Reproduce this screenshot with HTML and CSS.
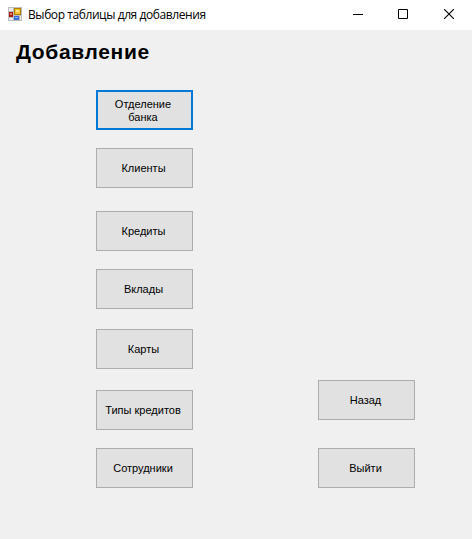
FILE: index.html
```html
<!DOCTYPE html>
<html lang="ru">
<head>
<meta charset="utf-8">
<title>Выбор таблицы для добавления</title>
<link rel="stylesheet" href="styles.css">
</head>
<body>
<header class="titlebar">
  <svg class="app-icon" width="14" height="14" viewBox="0 0 14 14" shape-rendering="crispEdges">
    <path fill="#bcbcbc" d="M0 0h14v14H0z"/>
    <path fill="#ececec" d="M1 1h4v3H1zM1 11h4v2H1zM12 9h1v4h-1z"/>
    <path fill="#a81c12" d="M1 5h4v5H1z"/>
    <path fill="#e8806c" d="M2 6h2v2H2z"/>
    <path fill="#b08000" d="M6 1h7v7H6z"/>
    <path fill="#f4c430" d="M7 2h5v5H7z"/>
    <path fill="#ffe48a" d="M8 3h3v2H8z"/>
    <path fill="#3a6fd8" d="M6 9h5v4H6z"/>
    <path fill="#86b0ff" d="M7 10h3v1H7z"/>
  </svg>
  <span class="caption">Выбор таблицы для добавления</span>
  <nav class="controls">
    <svg width="10" height="10" viewBox="0 0 10 10" shape-rendering="crispEdges"><path d="M0 5h10v1H0z"/></svg>
    <svg width="10" height="10" viewBox="0 0 10 10"><path d="M.5.5h9v9h-9z" fill="none" stroke="#000"/></svg>
    <svg class="close" width="10" height="10" viewBox="0 0 10 10"><path d="M0 0l10 10M10 0L0 10" stroke="#000" stroke-width="1.1"/></svg>
  </nav>
</header>
<main class="form">
  <h1 class="heading">Добавление</h1>
  <div class="columns">
    <div class="tables">
      <button class="btn focused">Отделение<br>банка</button>
      <button class="btn clients">Клиенты</button>
      <button class="btn credits">Кредиты</button>
      <button class="btn deposits">Вклады</button>
      <button class="btn cards">Карты</button>
      <button class="btn types">Типы кредитов</button>
      <button class="btn staff">Сотрудники</button>
    </div>
    <div class="actions">
      <button class="btn">Назад</button>
      <button class="btn">Выйти</button>
    </div>
  </div>
</main>
</body>
</html>
```
FILE: styles.css
```css
* { box-sizing: border-box; }
body {
  margin: 0;
  height: 539px;
  overflow: hidden;
  background: #f0f0f0;
  color: #000;
  font-family: "Liberation Sans", sans-serif;
}
.titlebar {
  display: flex;
  height: 30px;
  padding: 0 18px 0 8px;
  background: #fff;
}
.app-icon { margin-top: 7px; flex: none; }
.caption {
  margin-left: 6px;
  font: 12px/30px "Open Sans", sans-serif;
  letter-spacing: -0.42px;
  white-space: nowrap;
}
.controls {
  display: flex;
  gap: 35px;
  margin: 9px 0 0 auto;
}
.close { margin-left: 1px; }
.heading {
  margin: 0;
  height: 60px;
  padding: 7px 0 0 16px;
  font: 700 21px/30px "Liberation Sans", sans-serif;
  letter-spacing: 0.65px;
}
.columns {
  display: flex;
  gap: 125px;
  height: 398px;
  padding-left: 96px;
}
.tables, .actions {
  display: flex;
  flex-direction: column;
}
.actions {
  justify-content: flex-end;
  gap: 28px;
}
.btn {
  flex: none;
  width: 97px;
  height: 40px;
  margin: 0;
  padding: 0 2px 0 0;
  border: 1px solid #adadad;
  border-radius: 0;
  background: #e1e1e1;
  color: #000;
  font: 11px/13px "Liberation Sans", sans-serif;
  white-space: nowrap;
}
.focused { border: 2px solid #0078d7; padding: 1px 3px 0 0; }
.types, .staff { padding-right: 3px; }
.clients, .deposits, .staff { margin-top: 18px; }
.credits { margin-top: 23px; }
.cards { margin-top: 20px; }
.types { margin-top: 21px; }
```
